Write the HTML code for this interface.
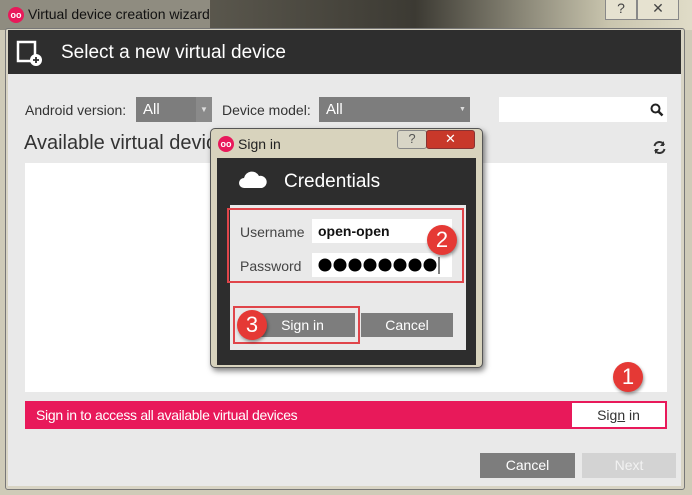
<!DOCTYPE html>
<html><head><style>
*{margin:0;padding:0;box-sizing:border-box}
body{width:692px;height:495px;overflow:hidden;background:#cfcbb8;font-family:"Liberation Sans","DejaVu Sans",sans-serif;position:relative}
.a{position:absolute}
.badge{position:absolute;width:30px;height:30px;border-radius:50%;background:#e53935;color:#fff;font-size:22px;text-align:center;line-height:30px;box-shadow:1px 2px 3px rgba(0,0,0,.4)}
.logo{position:absolute;width:16px;height:16px;border-radius:50%;background:#e8195a;color:#fff;font-size:9px;text-align:center;line-height:16px;font-weight:bold}
</style></head><body>
<div class="a" style="left:0;top:0;width:692px;height:30px;background:linear-gradient(90deg,#7a766a 0%,#5a574d 30%,#3c3a33 60%,#c9c5ae 88%,#e0dcc8 100%)"></div>
<div class="a" style="left:0;top:0;width:210px;height:30px;background:#8f8c80"></div>
<div class="logo" style="left:8px;top:7px">oo</div>
<div class="a" style="left:28px;top:6px;font-size:14px;color:#111">Virtual device creation wizard</div>
<div class="a" style="left:605px;top:0;width:32px;height:20px;border:1px solid #888;border-top:none;background:#e6e2d0;font-size:14px;text-align:center;color:#444">?</div>
<div class="a" style="left:637px;top:0;width:42px;height:20px;border:1px solid #888;border-top:none;background:#e6e2d0;font-size:14px;text-align:center;color:#444">✕</div>
<div class="a" style="left:5px;top:28px;width:680px;height:462px;background:#d8d4c4;border:1px solid #777;border-radius:3px"></div>
<div class="a" style="left:8px;top:30px;width:673px;height:44px;background:#2e2e2e"></div>
<svg class="a" style="left:16px;top:40px" width="28" height="26"><rect x="2" y="2" width="17" height="19" fill="none" stroke="#fff" stroke-width="2.5"/><circle cx="20" cy="20" r="6" fill="#fff"/><path d="M20 17v6M17 20h6" stroke="#2e2e2e" stroke-width="1.8"/></svg>
<div class="a" style="left:61px;top:42px;font-size:19px;color:#fff">Select a new virtual device</div>
<div class="a" style="left:8px;top:74px;width:673px;height:412px;background:#e9e9e9"></div>
<div class="a" style="left:25px;top:102px;font-size:14px;color:#333">Android version:</div>
<div class="a" style="left:136px;top:97px;width:76px;height:25px;background:#7d7d7d;color:#fff;font-size:15px;padding:4px 7px">All</div>
<div class="a" style="left:196px;top:97px;width:16px;height:25px;background:#8a8a8a;color:#ddd;font-size:8px;padding-top:8px;text-align:center">▼</div>
<div class="a" style="left:222px;top:102px;font-size:14px;color:#333">Device model:</div>
<div class="a" style="left:319px;top:97px;width:151px;height:25px;background:#7d7d7d;color:#fff;font-size:15px;padding:4px 7px">All</div>
<div class="a" style="left:459px;top:106px;color:#ddd;font-size:7px">▼</div>
<div class="a" style="left:499px;top:97px;width:168px;height:25px;background:#fff"></div>
<svg class="a" style="left:650px;top:103px" width="14" height="14"><circle cx="5.5" cy="5.5" r="4" fill="none" stroke="#222" stroke-width="2"/><path d="M8.5 8.5l4 4" stroke="#222" stroke-width="2.5"/></svg>
<div class="a" style="left:24px;top:132px;font-size:20px;color:#333">Available virtual devic</div>
<svg class="a" style="left:652px;top:140px" width="15" height="15"><path d="M2.5 6A5 5 0 0 1 12 5M12.5 9A5 5 0 0 1 3 10" fill="none" stroke="#333" stroke-width="2"/><path d="M12 1v5h-4z M3 14v-5h4z" fill="#333"/></svg>
<div class="a" style="left:25px;top:163px;width:642px;height:229px;background:#fff"></div>
<div class="a" style="left:25px;top:401px;width:642px;height:28px;background:#e8195a"></div>
<div class="a" style="left:36px;top:407px;font-size:14px;color:#fff;letter-spacing:-0.3px">Sign in to access all available virtual devices</div>
<div class="a" style="left:572px;top:403px;width:93px;height:24px;background:#fff;font-size:14px;color:#333;text-align:center;padding-top:4px">Sig<u>n</u> in</div>
<div class="badge" style="left:613px;top:362px">1</div>
<div class="a" style="left:480px;top:453px;width:95px;height:25px;background:#7d7d7d;color:#fff;font-size:14px;text-align:center;padding-top:4px">Cancel</div>
<div class="a" style="left:582px;top:453px;width:94px;height:25px;background:#d3d3d3;color:#f2f2f2;font-size:14px;text-align:center;padding-top:4px">Next</div>
<!-- dialog -->
<div class="a" style="left:210px;top:128px;width:273px;height:240px;background:#d8d3bd;border:1px solid #555;border-radius:5px;box-shadow:2px 3px 6px rgba(0,0,0,.5)"></div>
<div class="logo" style="left:218px;top:136px">oo</div>
<div class="a" style="left:238px;top:136px;font-size:14px;color:#222">Sign in</div>
<div class="a" style="left:397px;top:130px;width:30px;height:19px;background:#d8d5c6;border:1px solid #888;border-radius:3px;text-align:center;font-size:13px;color:#555">?</div>
<div class="a" style="left:426px;top:130px;width:49px;height:19px;background:#c8382a;border:1px solid #833;border-radius:3px;text-align:center;font-size:13px;color:#fff;font-weight:bold">✕</div>
<div class="a" style="left:217px;top:158px;width:259px;height:207px;background:#2d2d2d"></div>
<svg class="a" style="left:239px;top:171px" width="28" height="18"><path d="M5 17a5 5 0 0 1 0-10a8 8 0 0 1 15-2a6 6 0 0 1 3 12z" fill="#fff"/></svg>
<div class="a" style="left:284px;top:171px;font-size:19px;color:#fff">Credentials</div>
<div class="a" style="left:230px;top:205px;width:236px;height:145px;background:#e9e9e9"></div>
<div class="a" style="left:227px;top:208px;width:237px;height:75px;border:2px solid #e0454a"></div>
<div class="a" style="left:240px;top:224px;font-size:14px;color:#444">Username</div>
<div class="a" style="left:312px;top:219px;width:140px;height:24px;background:#fff;font-size:14px;font-weight:bold;color:#111;padding:4px 6px">open-open</div>
<div class="a" style="left:240px;top:258px;font-size:14px;color:#444">Password</div>
<div class="a" style="left:312px;top:253px;width:140px;height:24px;background:#fff"></div>
<svg class="a" style="left:318px;top:256px" width="126" height="18"><g fill="#000"><circle cx="7" cy="9" r="6.5"/><circle cx="22" cy="9" r="6.5"/><circle cx="37" cy="9" r="6.5"/><circle cx="52" cy="9" r="6.5"/><circle cx="67" cy="9" r="6.5"/><circle cx="82" cy="9" r="6.5"/><circle cx="97" cy="9" r="6.5"/><circle cx="112" cy="9" r="6.5"/></g><path d="M121 1v17" stroke="#000" stroke-width="1"/></svg>
<div class="badge" style="left:427px;top:225px">2</div>
<div class="a" style="left:250px;top:313px;width:105px;height:24px;background:#7d7d7d;color:#fff;font-size:14px;text-align:center;padding-top:4px">Sign in</div>
<div class="a" style="left:361px;top:313px;width:92px;height:24px;background:#7d7d7d;color:#fff;font-size:14px;text-align:center;padding-top:4px">Cancel</div>
<div class="a" style="left:233px;top:306px;width:127px;height:38px;border:2px solid #e0454a"></div>
<div class="badge" style="left:237px;top:310px">3</div>
</body></html>
